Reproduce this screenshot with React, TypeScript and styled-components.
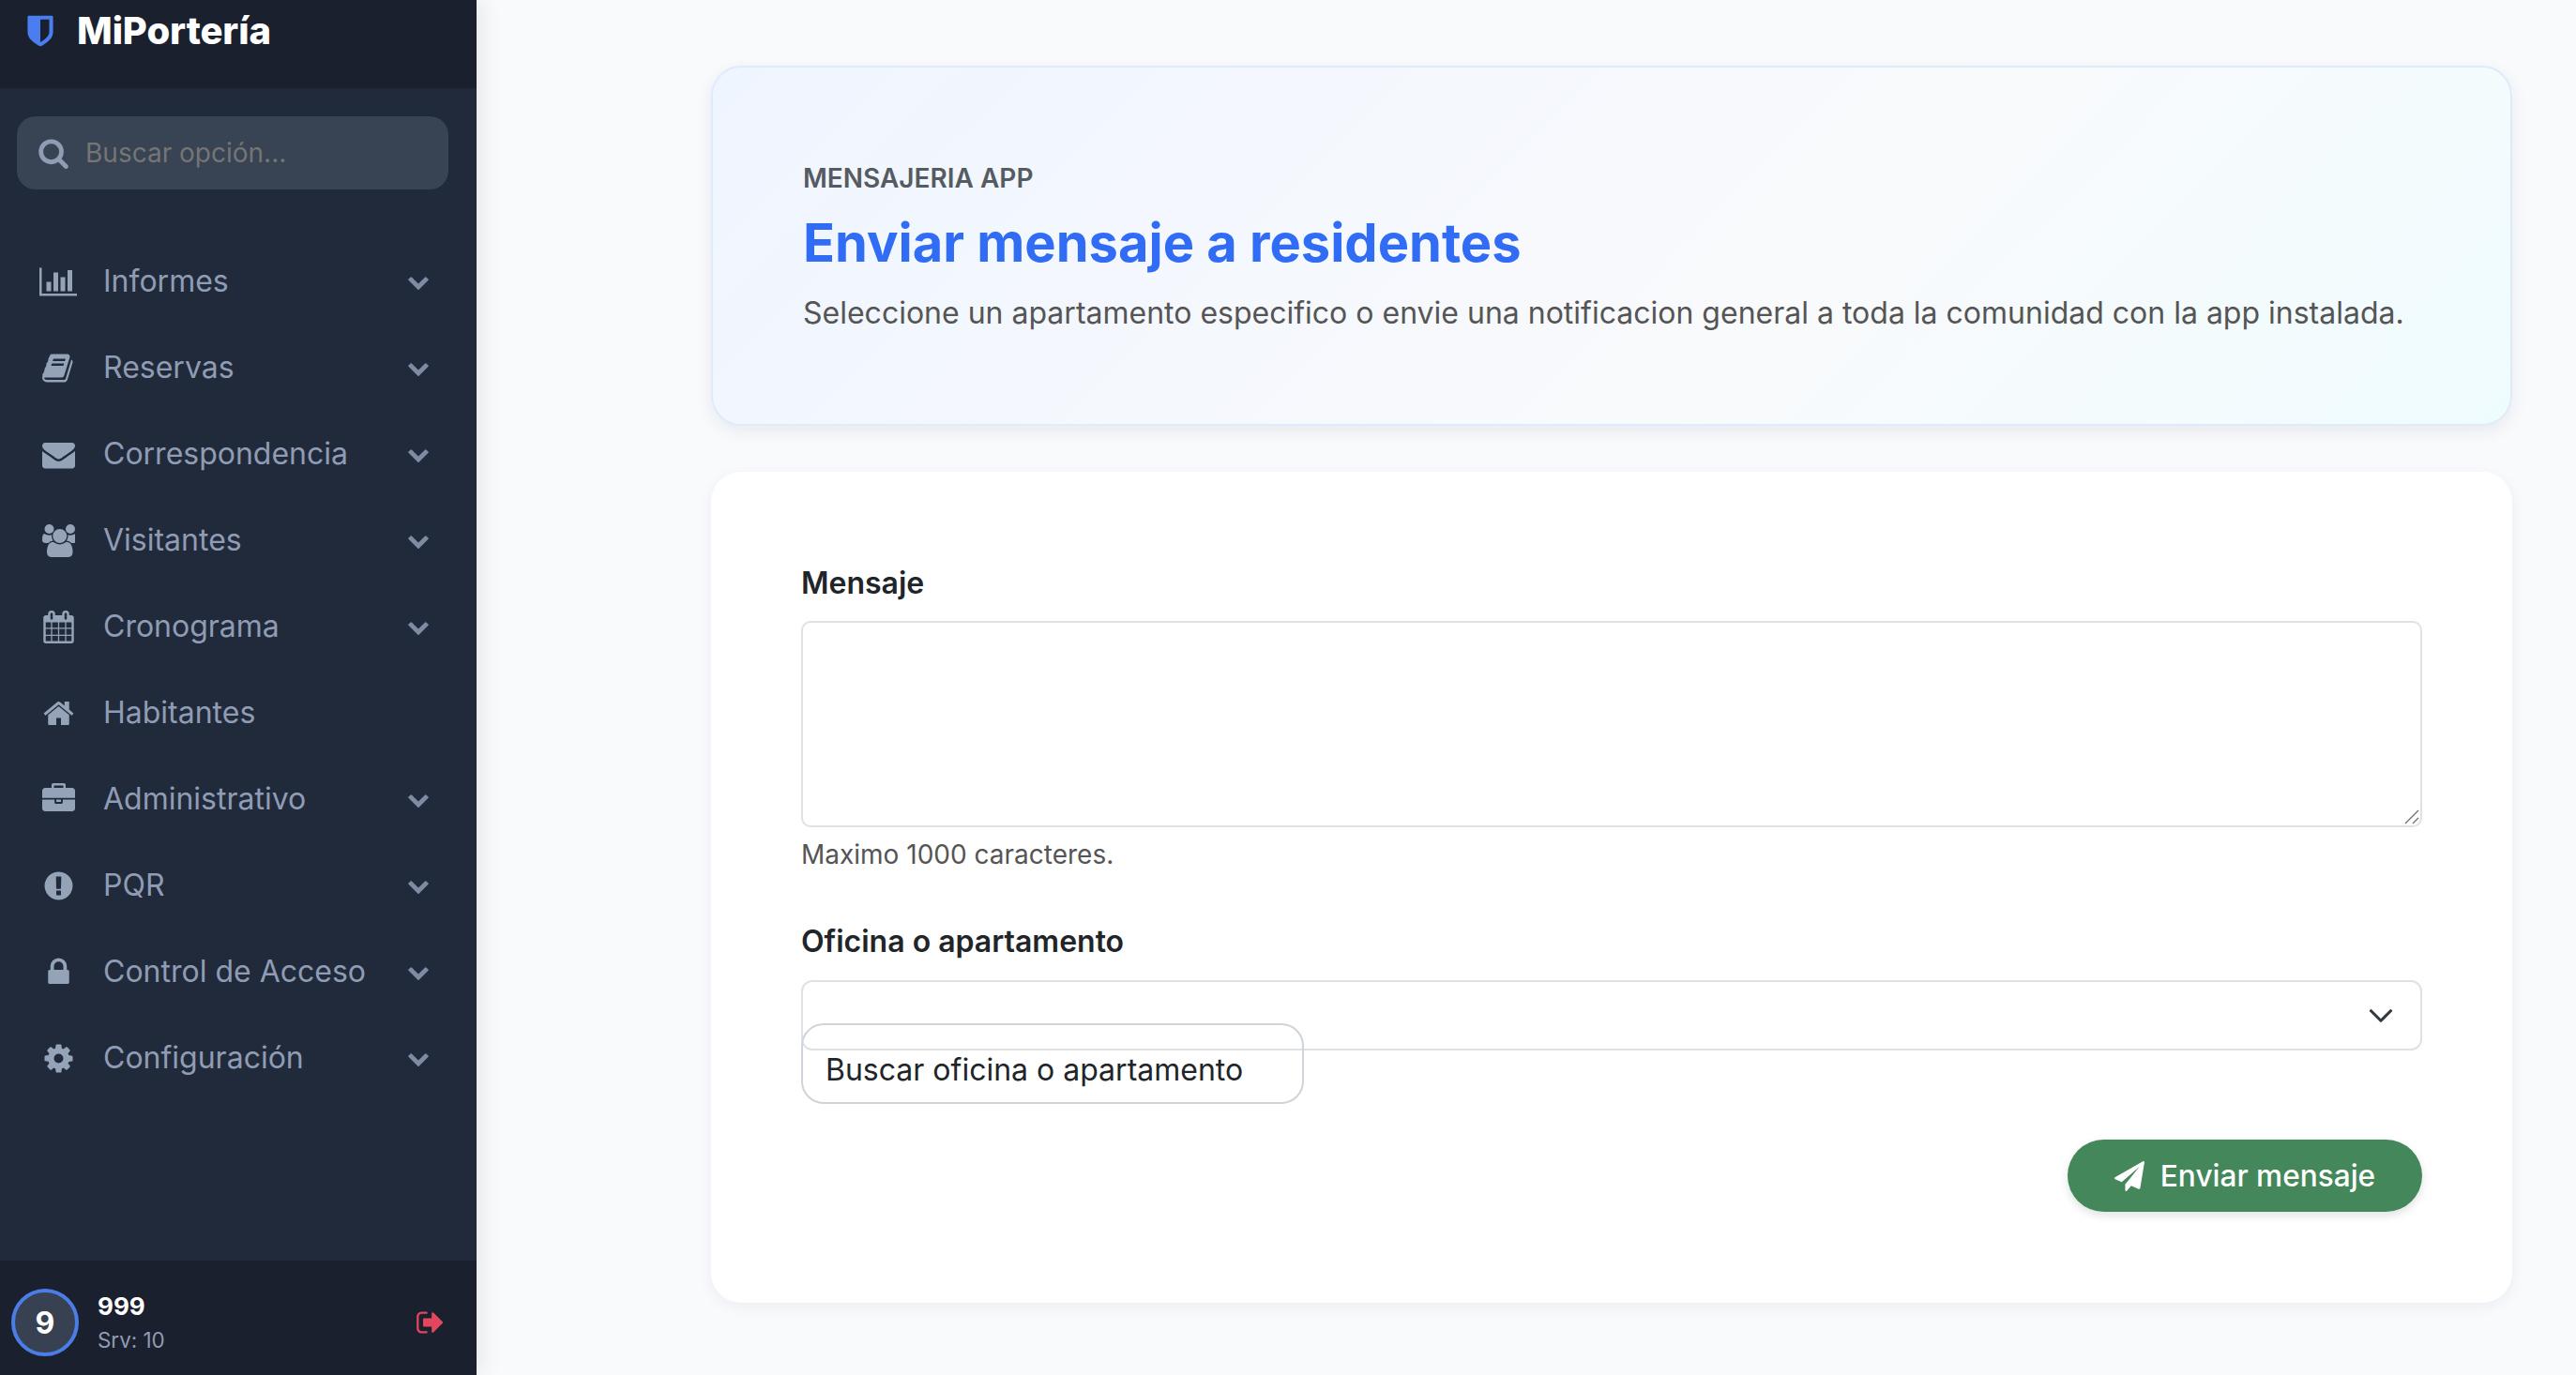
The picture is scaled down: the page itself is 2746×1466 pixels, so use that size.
import React from "react";
import styled, { createGlobalStyle } from "styled-components";

const GlobalStyle = createGlobalStyle`
  html, body { margin: 0; padding: 0; height: 100%; overflow: hidden; }
  body { font-family: Inter, "Noto Sans", sans-serif; background: #f9fafc; color: #212529; }
  * { box-sizing: border-box; }
`;

const P = {
  chart: "M640 896v512h-256v-512h256zm384-512v1024h-256v-1024h256zm1024 1152v128h-2048v-1536h128v1408h1920zm-640-896v768h-256v-768h256zm384-384v1152h-256v-1152h256z",
  book: "M1639 478q40 57 18 129l-275 906q-19 64-76.5 107.5t-122.5 43.5h-923q-77 0-148.5-53.5t-99.5-131.5q-24-67-2-127 0-4 3-27t4-37q1-8-3-21.5t-3-19.5q2-11 8-21t16.5-23.5 16.5-23.5q23-38 45-91.5t30-91.5q3-10 .5-30t-.5-28q3-11 17-28t17-23q21-36 42-92t25-90q1-9-2.5-32t.5-28q4-13 22-30.5t22-22.5q19-26 42.5-84.5t27.5-96.5q1-8-3-25.5t-2-26.5q2-8 9-18t18-23 17-21q8-12 16.5-30.5t15-35 16-36 19.5-32 26.5-23.5 36-11.5 47.5 5.5l-1 3q38-9 51-9h761q74 0 114 56t18 130l-274 906q-36 119-71.5 153.5t-128.5 34.5h-869q-27 0-38 15-11 16-1 43 24 70 144 70h923q29 0 56-15.5t35-41.5l300-987q7-22 5-57 38 15 59 43zm-1064 2q-4 13 2 22.5t20 9.5h608q13 0 25.5-9.5t16.5-22.5l21-64q4-13-2-22.5t-20-9.5h-608q-13 0-25.5 9.5t-16.5 22.5zm-83 256q-4 13 2 22.5t20 9.5h608q13 0 25.5-9.5t16.5-22.5l21-64q4-13-2-22.5t-20-9.5h-608q-13 0-25.5 9.5t-16.5 22.5z",
  envelope: "M1792 710v794q0 66-47 113t-113 47h-1472q-66 0-113-47t-47-113v-794q44 49 101 87 362 246 497 345 57 42 92.5 65.5t94.5 48 110 24.5h2q51 0 110-24.5t94.5-48 92.5-65.5q170-123 498-345 57-39 100-87zm0-294q0 79-49 151t-122 123q-376 261-468 325-10 7-42.5 30.5t-54 38-52 32.5-57.5 27-50 9h-2q-23 0-50-9t-57.5-27-52-32.5-54-38-42.5-30.5q-91-64-262-182.5t-205-142.5q-62-42-117-115.5t-55-136.5q0-78 41.5-130t118.5-52h1472q65 0 112.5 47t47.5 113z",
  users: "M593 896q-162 5-265 128h-134q-82 0-138-40.5t-56-118.5q0-353 124-353 6 0 43.5 21t97.5 42.5 119 21.5q67 0 133-23-5 37-5 66 0 139 81 256zm1071 637q0 120-73 189.5t-194 69.5h-874q-121 0-194-69.5t-73-189.5q0-53 3.5-103.5t14-109 26.5-108.5 43-97.5 62-81 85.5-53.5 111.5-20q10 0 43 21.5t73 48 107 48 135 21.5 135-21.5 107-48 73-48 43-21.5q61 0 111.5 20t85.5 53.5 62 81 43 97.5 26.5 108.5 14 109 3.5 103.5zm-1024-1277q0 106-75 181t-181 75-181-75-75-181 75-181 181-75 181 75 75 181zm704 384q0 159-112.5 271.5t-271.5 112.5-271.5-112.5-112.5-271.5 112.5-271.5 271.5-112.5 271.5 112.5 112.5 271.5zm576 225q0 78-56 118.5t-138 40.5h-134q-103-123-265-128 81-117 81-256 0-29-5-66 66 23 133 23 59 0 119-21.5t97.5-42.5 43.5-21q124 0 124 353zm-128-609q0 106-75 181t-181 75-181-75-75-181 75-181 181-75 181 75 75 181z",
  calendar: "M192 1664h288v-288h-288v288zm352 0h320v-288h-320v288zm-352-352h288v-320h-288v320zm352 0h320v-320h-320v320zm-352-384h288v-288h-288v288zm736 736h320v-288h-320v288zm-384-736h320v-288h-320v288zm768 736h288v-288h-288v288zm-384-352h320v-320h-320v320zm-352-864v-288q0-13-9.5-22.5t-22.5-9.5h-64q-13 0-22.5 9.5t-9.5 22.5v288q0 13 9.5 22.5t22.5 9.5h64q13 0 22.5-9.5t9.5-22.5zm736 864h288v-320h-288v320zm-384-384h320v-288h-320v288zm384 0h288v-288h-288v288zm32-480v-288q0-13-9.5-22.5t-22.5-9.5h-64q-13 0-22.5 9.5t-9.5 22.5v288q0 13 9.5 22.5t22.5 9.5h64q13 0 22.5-9.5t9.5-22.5zm384-64v1280q0 52-38 90t-90 38h-1408q-52 0-90-38t-38-90v-1280q0-52 38-90t90-38h128v-96q0-66 47-113t113-47h64q66 0 113 47t47 113v96h384v-96q0-66 47-113t113-47h64q66 0 113 47t47 113v96h128q52 0 90 38t38 90z",
  home: "M1472 992v480q0 26-19 45t-45 19h-384v-384h-256v384h-384q-26 0-45-19t-19-45v-480q0-1 .5-3t.5-3l575-474 575 474q1 2 1 6zm223-69l-62 74q-8 9-21 11h-3q-13 0-21-7l-692-577-692 577q-12 8-24 7-13-2-21-11l-62-74q-8-10-7-23.5t11-21.5l719-599q32-26 76-26t76 26l244 204v-195q0-14 9-23t23-9h192q14 0 23 9t9 23v408l219 182q10 8 11 21.5t-7 23.5z",
  briefcase: "M640 256h512v-128h-512v128zm1152 640v480q0 66-47 113t-113 47h-1472q-66 0-113-47t-47-113v-480h672v160q0 26 19 45t45 19h320q26 0 45-19t19-45v-160h672zm-768 0v128h-256v-128h256zm768-480v384h-1792v-384q0-66 47-113t113-47h352v-160q0-40 28-68t68-28h576q40 0 68 28t28 68v160h352q66 0 113 47t47 113z",
  exclamation: "M896 128q209 0 385.5 103t279.5 279.5 103 385.5-103 385.5-279.5 279.5-385.5 103-385.5-103-279.5-279.5-103-385.5 103-385.5 279.5-279.5 385.5-103zm128 1247v-190q0-14-9-23.5t-22-9.5h-192q-13 0-23 10t-10 23v190q0 13 10 23t23 10h192q13 0 22-9.5t9-23.5zm-2-344l18-621q0-12-10-18-10-8-24-8h-220q-14 0-24 8-10 6-10 18l17 621q0 10 10 17.5t24 7.5h185q14 0 23.5-7.5t10.5-17.5z",
  lock: "M640 768h512v-192q0-106-75-181t-181-75-181 75-75 181v192zm832 96v576q0 40-28 68t-68 28h-960q-40 0-68-28t-28-68v-576q0-40 28-68t68-28h32v-192q0-184 132-316t316-132 316 132 132 316v192h32q40 0 68 28t28 68z",
  cog: "M1152 896q0-106-75-181t-181-75-181 75-75 181 75 181 181 75 181-75 75-181zm512-109v222q0 12-8 23t-20 13l-185 28q-19 54-39 91 35 50 107 138 10 12 10 25t-9 23q-27 37-99 108t-94 71q-12 0-26-9l-138-108q-44 23-91 38-16 136-29 186-7 28-36 28h-222q-14 0-24.5-8.5t-11.5-21.5l-28-184q-49-16-90-37l-141 107q-10 9-25 9-14 0-25-11-126-114-165-168-7-10-7-23 0-12 8-23 15-21 51-66.5t54-70.5q-27-50-41-99l-183-27q-13-2-21-12.5t-8-23.5v-222q0-12 8-23t19-13l186-28q14-46 39-92-40-57-107-138-10-12-10-24 0-10 9-23 26-36 98.5-107.5t94.5-71.5q13 0 26 10l138 107q44-23 91-38 16-136 29-186 7-28 36-28h222q14 0 24.5 8.5t11.5 21.5l28 184q49 16 90 37l142-107q9-9 24-9 13 0 25 10 129 119 165 170 7 8 7 22 0 12-8 23-15 21-51 66.5t-54 70.5q26 50 41 98l183 28q13 2 21 12.5t8 23.5z",
  chevron: "M1683 808l-742 741q-19 19-45 19t-45-19l-742-741q-19-19-19-45.5t19-45.5l166-165q19-19 45-19t45 19l531 531 531-531q19-19 45-19t45 19l166 165q19 19 19 45.5t-19 45.5z",
  search: "M1216 832q0-185-131.5-316.5t-316.5-131.5-316.5 131.5-131.5 316.5 131.5 316.5 316.5 131.5 316.5-131.5 131.5-316.5zm512 832q0 52-38 90t-90 38q-54 0-90-38l-343-342q-179 124-399 124-143 0-273.5-55.5t-225-150-150-225-55.5-273.5 55.5-273.5 150-225 225-150 273.5-55.5 273.5 55.5 225 150 150 225 55.5 273.5q0 220-124 399l343 343q37 37 37 90z",
  signout: "M704 1440q0 4 1 20t.5 26.5-3 23.5-10 19.5-20.5 6.5h-320q-119 0-203.5-84.5t-84.5-203.5v-704q0-119 84.5-203.5t203.5-84.5h320q13 0 22.5 9.5t9.5 22.5q0 4 1 20t.5 26.5-3 23.5-10 19.5-20.5 6.5h-320q-66 0-113 47t-47 113v704q0 66 47 113t113 47h312l11.5 1 11.5 3 8 5.5 7 9 2 13.5zm928-544q0 26-19 45l-544 544q-19 19-45 19t-45-19-19-45v-288h-448q-26 0-45-19t-19-45v-384q0-26 19-45t45-19h448v-288q0-26 19-45t45-19 45 19l544 544q19 19 19 45z",
  plane: "M1764 11q33 24 27 64l-256 1536q-5 29-32 45-14 8-31 8-11 0-24-5l-453-185-242 295q-18 23-49 23-13 0-22-4-19-7-30.5-23.5t-11.5-36.5v-349l864-1059-1069 925-395-162q-37-14-40-55-2-40 32-59l1664-960q15-9 32-9 20 0 36 11z",
  shield: "M1344 960v-640h-448v1137q119-63 213-137 235-184 235-360zm192-768v768q0 86-33.5 170.5t-83 150-118 127.5-126.5 103-121 77.5-89.5 49.5-42.5 20q-12 6-26 6t-26-6q-16-7-42.5-20t-89.5-49.5-121-77.5-126.5-103-118-127.5-83-150-33.5-170.5v-768q0-26 19-45t45-19h1152q26 0 45 19t19 45z",
};

const Glyph = styled.svg<{ $size: number; $color: string }>`
  height: ${(p) => p.$size}px;
  flex: none;
  fill: ${(p) => p.$color};
  display: block;
`;

const Icon = ({ d, size, color, wide }: { d: string; size: number; color: string; wide?: boolean }) => (
  <Glyph viewBox={wide ? "0 0 2048 1792" : "0 0 1792 1792"} $size={size} $color={color} aria-hidden="true">
    <path d={d} />
  </Glyph>
);

const Page = styled.div`
  display: flex;
  width: 100vw;
  height: 100vh;
  overflow: hidden;
`;

const Sidebar = styled.aside`
  width: 508px;
  flex: none;
  height: 100%;
  display: flex;
  flex-direction: column;
  background: #202a3a;
  box-shadow: 4px 0 24px rgba(0, 0, 0, 0.09);
`;

const Brand = styled.div`
  height: 94px;
  flex: none;
  background: #1a202d;
  display: flex;
  align-items: flex-start;
  gap: 20px;
  padding: 14px 0 0 24px;
`;

const BrandName = styled.span`
  color: #fff;
  font-size: 40px;
  line-height: 38px;
  font-weight: 800;
  letter-spacing: -0.1px;
`;

const SearchBox = styled.label`
  margin: 30px 30px 0 18px;
  height: 78px;
  flex: none;
  display: flex;
  align-items: center;
  gap: 15px;
  padding: 0 22px;
  background: #384354;
  border-radius: 20px;
`;

const SearchInput = styled.input`
  flex: 1;
  min-width: 0;
  background: transparent;
  border: 0;
  outline: 0;
  font: 400 28px Inter, sans-serif;
  color: #fff;
  &::placeholder { color: #757575; opacity: 1; }
`;

const Nav = styled.nav`
  flex: 1;
  margin-top: 52px;
  padding: 0 30px 0 18px;
`;

const NavItem = styled.a`
  height: 92px;
  display: flex;
  align-items: center;
  color: #8f9cb4;
  font-size: 32px;
  line-height: 38px;
`;

const NavIconSlot = styled.span`
  width: 92px;
  padding-left: 26px;
  flex: none;
  display: flex;
  align-items: center;
`;

const NavIconCenter = styled.span`
  width: 36px;
  display: flex;
  justify-content: center;
`;

const NavLabel = styled.span`
  flex: 1;
`;

const Caret = styled.span`
  width: 24px;
  margin-right: 20px;
  display: flex;
  justify-content: center;
`;

const UserBar = styled.footer`
  height: 122px;
  flex: none;
  background: #1a202d;
  display: flex;
  align-items: center;
  padding: 10px 33px 0 12px;
`;

const Avatar = styled.div`
  width: 72px;
  height: 72px;
  flex: none;
  border-radius: 50%;
  border: 4px solid #4a7de6;
  background: #374151;
  color: #fff;
  font-size: 32px;
  font-weight: 700;
  display: flex;
  align-items: center;
  justify-content: center;
`;

const UserInfo = styled.div`
  flex: 1;
  margin-left: 20px;
  display: flex;
  flex-direction: column;
  gap: 5px;
`;

const UserName = styled.div`
  color: #fff;
  font-size: 26px;
  line-height: 32px;
  font-weight: 700;
`;

const UserRole = styled.div`
  color: #8f9cb4;
  font-size: 22.4px;
  line-height: 30px;
`;

const Main = styled.main`
  flex: 1;
  min-width: 0;
  display: flex;
  flex-direction: column;
  gap: 49px;
  padding: 70px 68px 0 250px;
`;

const Hero = styled.section`
  height: 384px;
  flex: none;
  padding: 6px 96px 0;
  display: flex;
  flex-direction: column;
  justify-content: center;
  border: 2px solid #dfeafc;
  border-radius: 32px;
  background: linear-gradient(135deg, #eff5ff 0%, #f9fafc 60%, #effcfe 100%);
  box-shadow: 0 6px 18px rgba(20, 40, 80, 0.08);
`;

const Eyebrow = styled.div`
  color: #565b62;
  font-size: 28px;
  line-height: 34px;
  font-weight: 600;
`;

const Title = styled.h1`
  margin: 18px 0 0;
  color: #316cf4;
  font-size: 56px;
  line-height: 68px;
  font-weight: 700;
`;

const Lead = styled.p`
  margin: 18px 0 0;
  color: #555;
  font-size: 32px;
  line-height: 46px;
  white-space: nowrap;
`;

const FormCard = styled.section`
  height: 886px;
  flex: none;
  background: #fff;
  border-radius: 32px;
  padding: 98px 96px 0;
  box-shadow: 0 4px 16px rgba(20, 40, 80, 0.06);
  display: flex;
  flex-direction: column;
`;

const FieldLabel = styled.label`
  font-size: 32px;
  line-height: 42px;
  font-weight: 600;
  color: #212529;
  display: block;
`;

const AreaWrap = styled.div`
  position: relative;
  margin-top: 19px;
  height: 220px;
`;

const MessageArea = styled.textarea`
  display: block;
  width: 100%;
  height: 100%;
  border: 2px solid #dee2e6;
  border-radius: 10px;
  outline: 0;
  background: #fff;
  resize: none;
`;

const Grip = styled.svg`
  position: absolute;
  right: 3px;
  bottom: 3px;
  width: 16px;
  height: 16px;
`;

const Help = styled.div`
  margin-top: 12px;
  font-size: 28px;
  line-height: 34px;
  color: #555;
`;

const SecondLabel = styled(FieldLabel)`
  margin-top: 55px;
`;

const SelectWrap = styled.div`
  position: relative;
  margin-top: 20px;
  height: 75px;
`;

const SelectBox = styled.div`
  height: 100%;
  border: 2px solid #dee2e6;
  border-radius: 12px;
  display: flex;
  align-items: center;
  justify-content: flex-end;
  padding-right: 28px;
`;

const SearchOverlay = styled.div`
  position: absolute;
  left: 0;
  top: 46px;
  width: 536px;
  height: 86px;
  border: 2px solid #ced4da;
  border-radius: 24px;
  padding: 28px 0 0 24px;
  font-size: 32px;
  line-height: 40px;
  color: #212529;
`;

const Actions = styled.div`
  margin-top: 95px;
  display: flex;
  justify-content: flex-end;
`;

const SendButton = styled.button`
  width: 378px;
  height: 77px;
  border: 0;
  border-radius: 39px;
  background: #43875a;
  color: #fff;
  font: 500 31.6px Inter, sans-serif;
  display: flex;
  align-items: center;
  justify-content: center;
  gap: 17px;
  box-shadow: 0 4px 10px rgba(20, 60, 40, 0.14);
`;

const menu = [
  { label: "Informes", d: P.chart, wide: true, caret: true },
  { label: "Reservas", d: P.book, caret: true },
  { label: "Correspondencia", d: P.envelope, caret: true },
  { label: "Visitantes", d: P.users, caret: true },
  { label: "Cronograma", d: P.calendar, caret: true },
  { label: "Habitantes", d: P.home, caret: false },
  { label: "Administrativo", d: P.briefcase, caret: true },
  { label: "PQR", d: P.exclamation, caret: true },
  { label: "Control de Acceso", d: P.lock, caret: true },
  { label: "Configuración", d: P.cog, caret: true },
];

export default function App() {
  return (
    <>
      <GlobalStyle />
      <Page>
        <Sidebar>
          <Brand>
            <Icon d={P.shield} size={38} color="#4a7df0" />
            <BrandName>MiPortería</BrandName>
          </Brand>
          <SearchBox>
            <Icon d={P.search} size={34} color="#8f9cb4" />
            <SearchInput placeholder="Buscar opción..." />
          </SearchBox>
          <Nav>
            {menu.map((item) => (
              <NavItem key={item.label}>
                <NavIconSlot>
                  <NavIconCenter>
                    <Icon d={item.d} size={35} color="#94a3b8" wide={item.wide} />
                  </NavIconCenter>
                </NavIconSlot>
                <NavLabel>{item.label}</NavLabel>
                {item.caret && (
                  <Caret>
                    <Icon d={P.chevron} size={24} color="#7f8ba3" />
                  </Caret>
                )}
              </NavItem>
            ))}
          </Nav>
          <UserBar>
            <Avatar>9</Avatar>
            <UserInfo>
              <UserName>999</UserName>
              <UserRole>Srv: 10</UserRole>
            </UserInfo>
            <Icon d={P.signout} size={32} color="#e2475e" />
          </UserBar>
        </Sidebar>
        <Main>
          <Hero>
            <Eyebrow>MENSAJERIA APP</Eyebrow>
            <Title>Enviar mensaje a residentes</Title>
            <Lead>Seleccione un apartamento especifico o envie una notificacion general a toda la comunidad con la app instalada.</Lead>
          </Hero>
          <FormCard>
            <FieldLabel>Mensaje</FieldLabel>
            <AreaWrap>
              <MessageArea />
              <Grip viewBox="0 0 16 16" fill="none" stroke="#6b6f75" strokeWidth="1.3" aria-hidden="true">
                <path d="M1 15L15 1M9 15L15 9" />
              </Grip>
            </AreaWrap>
            <Help>Maximo 1000 caracteres.</Help>
            <SecondLabel>Oficina o apartamento</SecondLabel>
            <SelectWrap>
              <SelectBox>
                <svg width="28" height="28" viewBox="0 0 16 16" fill="none" stroke="#343a40" strokeWidth="1.8" strokeLinecap="round" strokeLinejoin="round" aria-hidden="true">
                  <path d="M2 5l6 6 6-6" />
                </svg>
              </SelectBox>
              <SearchOverlay>Buscar oficina o apartamento</SearchOverlay>
            </SelectWrap>
            <Actions>
              <SendButton>
                <Icon d={P.plane} size={32} color="#fff" />
                Enviar mensaje
              </SendButton>
            </Actions>
          </FormCard>
        </Main>
      </Page>
    </>
  );
}
